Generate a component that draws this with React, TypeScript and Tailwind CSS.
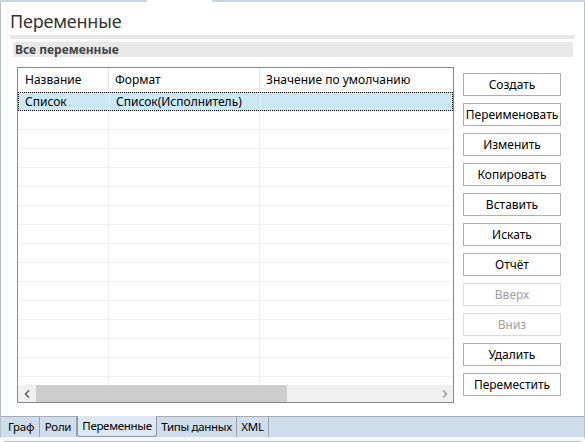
import React from "react";

const buttons: { label: string; disabled?: boolean }[] = [
  { label: "Создать" },
  { label: "Переименовать" },
  { label: "Изменить" },
  { label: "Копировать" },
  { label: "Вставить" },
  { label: "Искать" },
  { label: "Отчёт" },
  { label: "Вверх", disabled: true },
  { label: "Вниз", disabled: true },
  { label: "Удалить" },
  { label: "Переместить" },
];

const tabs = [
  { label: "Граф", w: "w-[37px]" },
  { label: "Роли", w: "w-[37px]" },
  { label: "Переменные", w: "w-[80px]", active: true },
  { label: "Типы данных", w: "w-[80px]" },
  { label: "XML", w: "w-[32px]" },
];

function Row({ selected, name, format }: { selected?: boolean; name?: string; format?: string }) {
  return (
    <div
      className={
        selected
          ? "flex h-[19px] shrink-0 border border-dotted border-black bg-[#cce8f7]"
          : "flex h-[19px] shrink-0 border-b border-[#f0f0f0]"
      }
    >
      <div className="w-[91px] shrink-0 border-r border-[#eaf0f6] pl-[6px] leading-[17px]">{name}</div>
      <div className="w-[151px] shrink-0 border-r border-[#eaf0f6] pl-[6px] leading-[17px]">{format}</div>
      <div className="flex-1" />
    </div>
  );
}

export default function App() {
  return (
    <div
      className="flex h-[442px] w-[585px] flex-col overflow-hidden bg-white text-[12px] text-black"
      style={{ fontFamily: '"Noto Sans", "Open Sans", sans-serif' }}
    >
      {/* strip of the outer tab above */}
      <div className="flex h-[2px] shrink-0">
        <div className="w-[147px] bg-[#c9d5e2]" />
        <div className="w-[65px]" />
        <div className="flex-1 bg-[#c9d5e2]" />
      </div>

      <div className="flex flex-1 flex-col rounded-b-[6px] border-x border-b border-[#b4bfcc]">
        <div className="h-[33px] shrink-0 pl-[9px] pt-[7px] text-[18px] leading-[24px] tracking-[-0.2px] text-[#333]">
          Переменные
        </div>
        <div className="ml-[9px] mr-[9px] h-[4px] shrink-0 bg-[#e8e8e8]" />
        <div className="ml-[12px] mr-[11px] mt-[3px] h-[15px] shrink-0 bg-[#e8e8e8] pl-[2px] text-[12px] font-bold leading-[15px] text-[#444]">
          Все переменные
        </div>

        <div className="mt-[10px] flex shrink-0 pl-[16px]">
          {/* table */}
          <div className="flex h-[336px] w-[437px] flex-col border border-[#82878f]">
            <div className="flex h-[24px] shrink-0 items-center">
              <div className="w-[91px] shrink-0 border-r border-[#dfe6ee] pl-[7px] leading-[24px]">Название</div>
              <div className="w-[151px] shrink-0 border-r border-[#dfe6ee] pl-[6px] leading-[24px]">Формат</div>
              <div className="flex-1 pl-[6px] leading-[24px]">Значение по умолчанию</div>
            </div>
            <div className="flex flex-1 flex-col overflow-hidden">
              <Row selected name="Список" format="Список(Исполнитель)" />
              {Array.from({ length: 15 }).map((_, i) => (
                <Row key={i} />
              ))}
            </div>
            {/* horizontal scrollbar */}
            <div className="flex h-[17px] shrink-0 items-center bg-[#f0f0f0]">
              <div className="flex w-[18px] shrink-0 items-center justify-center">
                <svg width="6" height="8" viewBox="0 0 6 8">
                  <path d="M5 0.5 L1.5 4 L5 7.5" fill="none" stroke="#606060" strokeWidth="1.6" />
                </svg>
              </div>
              <div className="h-[17px] w-[251px] shrink-0 bg-[#cdcdcd]" />
              <div className="flex-1" />
              <div className="flex w-[17px] shrink-0 items-center justify-center">
                <svg width="6" height="8" viewBox="0 0 6 8">
                  <path d="M1 0.5 L4.5 4 L1 7.5" fill="none" stroke="#a0a0a0" strokeWidth="1.6" />
                </svg>
              </div>
            </div>
          </div>

          {/* buttons */}
          <div className="ml-[9px] mt-[6px] flex flex-col gap-[7px]">
            {buttons.map((b) => (
              <div
                key={b.label}
                className={
                  b.disabled
                    ? "flex h-[23px] w-[98px] items-center justify-center border border-[#dadada] bg-white text-[#a0a0a0]"
                    : "flex h-[23px] w-[98px] items-center justify-center border border-[#adadad] bg-white"
                }
              >
                {b.label}
              </div>
            ))}
          </div>
        </div>

        <div className="flex-1" />

        {/* bottom tabs */}
        <div className="flex h-[21px] shrink-0 border-t border-[#a5acb5] bg-[#cfdcea] pl-[2px] text-[11.5px] tracking-[-0.3px]">
          {tabs.map((t) =>
            t.active ? (
              <div
                key={t.label}
                className={`${t.w} -mt-px shrink-0 overflow-hidden whitespace-nowrap rounded-b-[3px] border-x border-b border-[#8e96a0] bg-[#dde7f2] text-center leading-[19px]`}
              >
                {t.label}
              </div>
            ) : (
              <div
                key={t.label}
                className={`${t.w} shrink-0 overflow-hidden whitespace-nowrap border-r border-[#9aa2ac] text-center leading-[19px]`}
              >
                {t.label}
              </div>
            ),
          )}
        </div>
        <div className="h-[4px] shrink-0 bg-[#f4f6f8]" />
      </div>
    </div>
  );
}
